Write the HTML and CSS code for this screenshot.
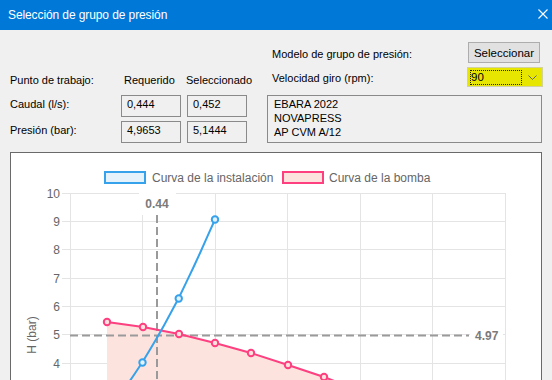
FILE: index.html
```html
<!DOCTYPE html>
<html lang="es">
<head>
<meta charset="utf-8">
<title>Selección de grupo de presión</title>
<link rel="stylesheet" href="styles.css">
</head>
<body>
<div class="window">
  <header class="titlebar">
    <span class="title">Selección de grupo de presión</span>
    <svg class="close" width="10" height="10" viewBox="0 0 10 10"><path d="M0.5 0.5 L9.5 9.5 M9.5 0.5 L0.5 9.5" stroke="#fff" stroke-width="1.1" fill="none"/></svg>
  </header>

  <div class="form">
    <div class="right-cell row-a">
      <span class="rlabel">Modelo de grupo de presión:</span>
      <button class="btn">Seleccionar</button>
    </div>

    <div class="lbl row-b">Punto de trabajo:</div>
    <div class="hdr row-b col-req">Requerido</div>
    <div class="hdr row-b col-sel">Seleccionado</div>
    <div class="right-cell row-b">
      <span class="rlabel">Velocidad giro (rpm):</span>
      <div class="combo">
        <span class="focus">90</span>
        <svg class="chev" width="9" height="5" viewBox="0 0 9 5"><path d="M0.5 0.5 L4.5 4.5 L8.5 0.5" stroke="#606060" stroke-width="1" fill="none"/></svg>
      </div>
    </div>

    <div class="lbl row-c">Caudal (l/s):</div>
    <div class="box row-c col-req">0,444</div>
    <div class="box row-c col-sel">0,452</div>
    <div class="memo">EBARA 2022<br>NOVAPRESS<br>AP CVM A/12</div>

    <div class="lbl row-d">Presión (bar):</div>
    <div class="box row-d col-req">4,9653</div>
    <div class="box row-d col-sel">5,1444</div>
  </div>

  <div class="panel">
    <svg class="chart" width="530" height="248" viewBox="11 153 530 248">
      <!-- legend -->
      <rect x="105" y="172" width="40" height="11" fill="#e5f2fc" stroke="#36a2eb" stroke-width="2"/>
      <text class="legend" x="152" y="182">Curva de la instalación</text>
      <rect x="283" y="172" width="40" height="11" fill="#fde3de" stroke="#fe3f80" stroke-width="2"/>
      <text class="legend" x="329" y="182">Curva de la bomba</text>

      <!-- grid -->
      <g stroke="#e4e4e4" stroke-width="1">
        <line x1="62" y1="193.5" x2="505" y2="193.5"/>
        <line x1="62" y1="221.5" x2="505" y2="221.5"/>
        <line x1="62" y1="249.5" x2="505" y2="249.5"/>
        <line x1="62" y1="278.5" x2="505" y2="278.5"/>
        <line x1="62" y1="306.5" x2="505" y2="306.5"/>
        <line x1="62" y1="334.5" x2="505" y2="334.5"/>
        <line x1="62" y1="363.5" x2="505" y2="363.5"/>
        <line x1="62" y1="391.5" x2="505" y2="391.5"/>
        <line x1="70.5" y1="193" x2="70.5" y2="401"/>
        <line x1="142.5" y1="193" x2="142.5" y2="401"/>
        <line x1="215.5" y1="193" x2="215.5" y2="401"/>
        <line x1="287.5" y1="193" x2="287.5" y2="401"/>
        <line x1="360.5" y1="193" x2="360.5" y2="401"/>
        <line x1="432.5" y1="193" x2="432.5" y2="401"/>
        <line x1="505.5" y1="193" x2="505.5" y2="401"/>
      </g>

      <!-- y ticks -->
      <g class="tick">
        <text x="60" y="197.5">10</text>
        <text x="60" y="225.5">9</text>
        <text x="60" y="253.5">8</text>
        <text x="60" y="282.5">7</text>
        <text x="60" y="310.5">6</text>
        <text x="60" y="338.5">5</text>
        <text x="60" y="367.5">4</text>
      </g>
      <text class="axis" x="32" y="339" transform="rotate(-90 32 335)" text-anchor="middle">H (bar)</text>

      <!-- pump area -->
      <polygon points="107,322 143,327 179,334 215,343 251,353 288,365 324,377 360,391 396,405 107,405" fill="#fde3de"/>

      <!-- annotations -->
      <line x1="157" y1="215" x2="157" y2="401" stroke="#9a9a9a" stroke-width="2" stroke-dasharray="8 4"/>
      <line x1="70" y1="335.5" x2="469" y2="335.5" stroke="#9a9a9a" stroke-width="2" stroke-dasharray="8 4"/>
      <rect x="139" y="189" width="37" height="26" fill="#fff"/>
      <text class="anno" x="157" y="208" text-anchor="middle">0.44</text>
      <rect x="470" y="326" width="33" height="20" fill="#fff"/>
      <text class="anno" x="475" y="340">4.97</text>

      <!-- pump curve -->
      <polyline points="107,322 143,327 179,334 215,343 251,353 288,365 324,377 360,391 396,405" fill="none" stroke="#fe3f80" stroke-width="2"/>
      <g fill="#fde3de" stroke="#fe3f80" stroke-width="2">
        <circle cx="107" cy="322" r="3.2"/>
        <circle cx="143" cy="327" r="3.2"/>
        <circle cx="179" cy="334" r="3.2"/>
        <circle cx="215" cy="343" r="3.2"/>
        <circle cx="251" cy="353" r="3.2"/>
        <circle cx="288" cy="365" r="3.2"/>
        <circle cx="324" cy="377" r="3.2"/>
        <circle cx="360" cy="391" r="3.2"/>
      </g>

      <!-- system curve -->
      <polyline points="120.75,393.6 128,383.6 135.25,373 142.5,362 149.75,350.1 157,337.8 164.25,324.9 171.5,311.5 178.75,298 186,282.9 193.25,267.7 200.5,252 207.75,235.7 215,219.5" fill="none" stroke="#36a2eb" stroke-width="2"/>
      <g fill="#e5f2fc" stroke="#36a2eb" stroke-width="2">
        <circle cx="142.5" cy="362.5" r="3.2"/>
        <circle cx="178.75" cy="298.5" r="3.2"/>
        <circle cx="215" cy="219.5" r="3.2"/>
      </g>
    </svg>
  </div>
</div>
</body>
</html>
```

FILE: styles.css
```css
* { box-sizing: border-box; }

html, body {
  margin: 0;
  padding: 0;
}

body {
  width: 552px;
  height: 380px;
  overflow: hidden;
  background: #f0f0f0;
  font-family: "Liberation Sans", Arial, sans-serif;
  font-size: 11px;
  color: #000;
}

.window {
  width: 552px;
  height: 380px;
  overflow: hidden;
}

.titlebar {
  height: 30px;
  background: #0078d7;
  color: #fff;
  display: flex;
  align-items: center;
  justify-content: space-between;
  padding: 0 8px 1px 8px;
}

.title {
  font-size: 12px;
  letter-spacing: -0.1px;
}

.close {
  display: block;
  margin-right: -4px;
  margin-bottom: 1px;
}

.form {
  display: grid;
  grid-template-columns: 111px 60px 6px 60px 20px 275px;
  grid-template-rows: 21px 20px 26px 22px;
  row-gap: 4px;
  padding: 12px 10px 0 10px;
}

.row-a { grid-row: 1; }
.row-b { grid-row: 2; }
.row-c { grid-row: 3; align-self: end; }
.row-d { grid-row: 4; }

.col-req { grid-column: 2; }
.col-sel { grid-column: 4; }

.right-cell {
  grid-column: 6;
  display: flex;
  align-items: center;
  justify-content: space-between;
}

.rlabel {
  padding-left: 5px;
  padding-top: 2px;
}

.btn {
  width: 72px;
  height: 21px;
  margin-right: 2px;
  padding: 0;
  background: #e1e1e1;
  border: 1px solid #adadad;
  font-family: inherit;
  font-size: 11.5px;
  color: #000;
}

.combo {
  width: 76px;
  height: 20px;
  margin-right: -1px;
  background: #e6e600;
  border: 1px solid #d2d2a0;
  display: flex;
  align-items: center;
  justify-content: space-between;
  padding: 0 5px 0 2px;
}

.focus {
  width: 52px;
  height: 15px;
  border: 1px dotted #202020;
  font-size: 11.5px;
  line-height: 13px;
  padding-left: 0;
}

.chev { display: block; margin-top: 1px; }

.lbl {
  grid-column: 1;
  padding-top: 5px;
}

.row-b.lbl, .row-b.hdr { padding-top: 7px; }

.hdr.col-req { padding-left: 3px; }
.hdr.col-sel { margin-left: -1px; white-space: nowrap; }

.row-c.lbl { height: 22px; padding-top: 3px; }
.row-d.lbl { padding-top: 3px; }

.box {
  height: 22px;
  border: 1px solid #8a8a8a;
  background: #f0f0f0;
  padding: 2px 0 0 5px;
}

.memo {
  grid-column: 6;
  grid-row: 3 / span 2;
  align-self: end;
  height: 48px;
  border: 1px solid #8a8a8a;
  background: #f0f0f0;
  padding: 1px 0 0 6px;
  line-height: 14px;
}

.panel {
  margin: 9px 10px 0 10px;
  height: 260px;
  background: #fff;
  border: 1px solid #6a6a6a;
}

.chart {
  display: block;
  font-family: "Liberation Sans", Arial, sans-serif;
}

.legend { font-size: 12px; fill: #666; }
.tick text { font-size: 12px; fill: #666; text-anchor: end; }
.axis { font-size: 12px; fill: #666; }
.anno { font-size: 12px; font-weight: bold; fill: #7a7a7a; }
```
